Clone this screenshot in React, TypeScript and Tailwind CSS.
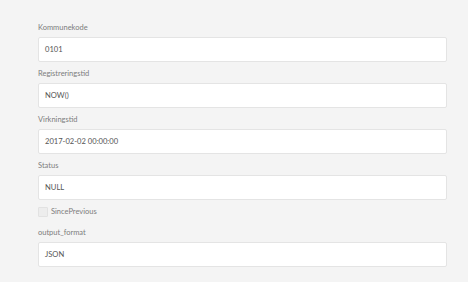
import React from "react";

const fields = [
  { label: "Kommunekode", value: "0101" },
  { label: "Registreringstid", value: "NOW()" },
  { label: "Virkningstid", value: "2017-02-02 00:00:00" },
  { label: "Status", value: "NULL" },
];

const Field = ({ label, value }: { label: string; value: string }) => (
  <div className="flex flex-col mb-[7px]">
    <p className="text-[7.5px] leading-[10px] h-[10px] text-[#7d7d7d] mb-[4px]">{label}</p>
    <div className="h-[25px] w-[409px] bg-white border border-[#e4e4e4] rounded-[2px] pl-[6px] flex items-center text-[7.6px] text-[#555]">
      {value}
    </div>
  </div>
);

const App = () => {
  return (
    <div
      className="w-[468px] h-[282px] bg-[#f4f4f4] pl-[38px] pt-[23px] overflow-hidden"
      style={{ fontFamily: "Lato, 'Open Sans', sans-serif" }}
    >
      {fields.map((f) => (
        <Field key={f.label} label={f.label} value={f.value} />
      ))}
      <div className="flex items-center h-[10px]">
        <span className="w-[10px] h-[10px] bg-[#ededed] border border-[#e2e2e2] rounded-[1px]" />
        <span className="ml-[3px] text-[7.5px] text-[#7d7d7d]">SincePrevious</span>
      </div>
      <div className="mt-[11px]">
        <Field label="output_format" value="JSON" />
      </div>
    </div>
  );
};

export default App;
